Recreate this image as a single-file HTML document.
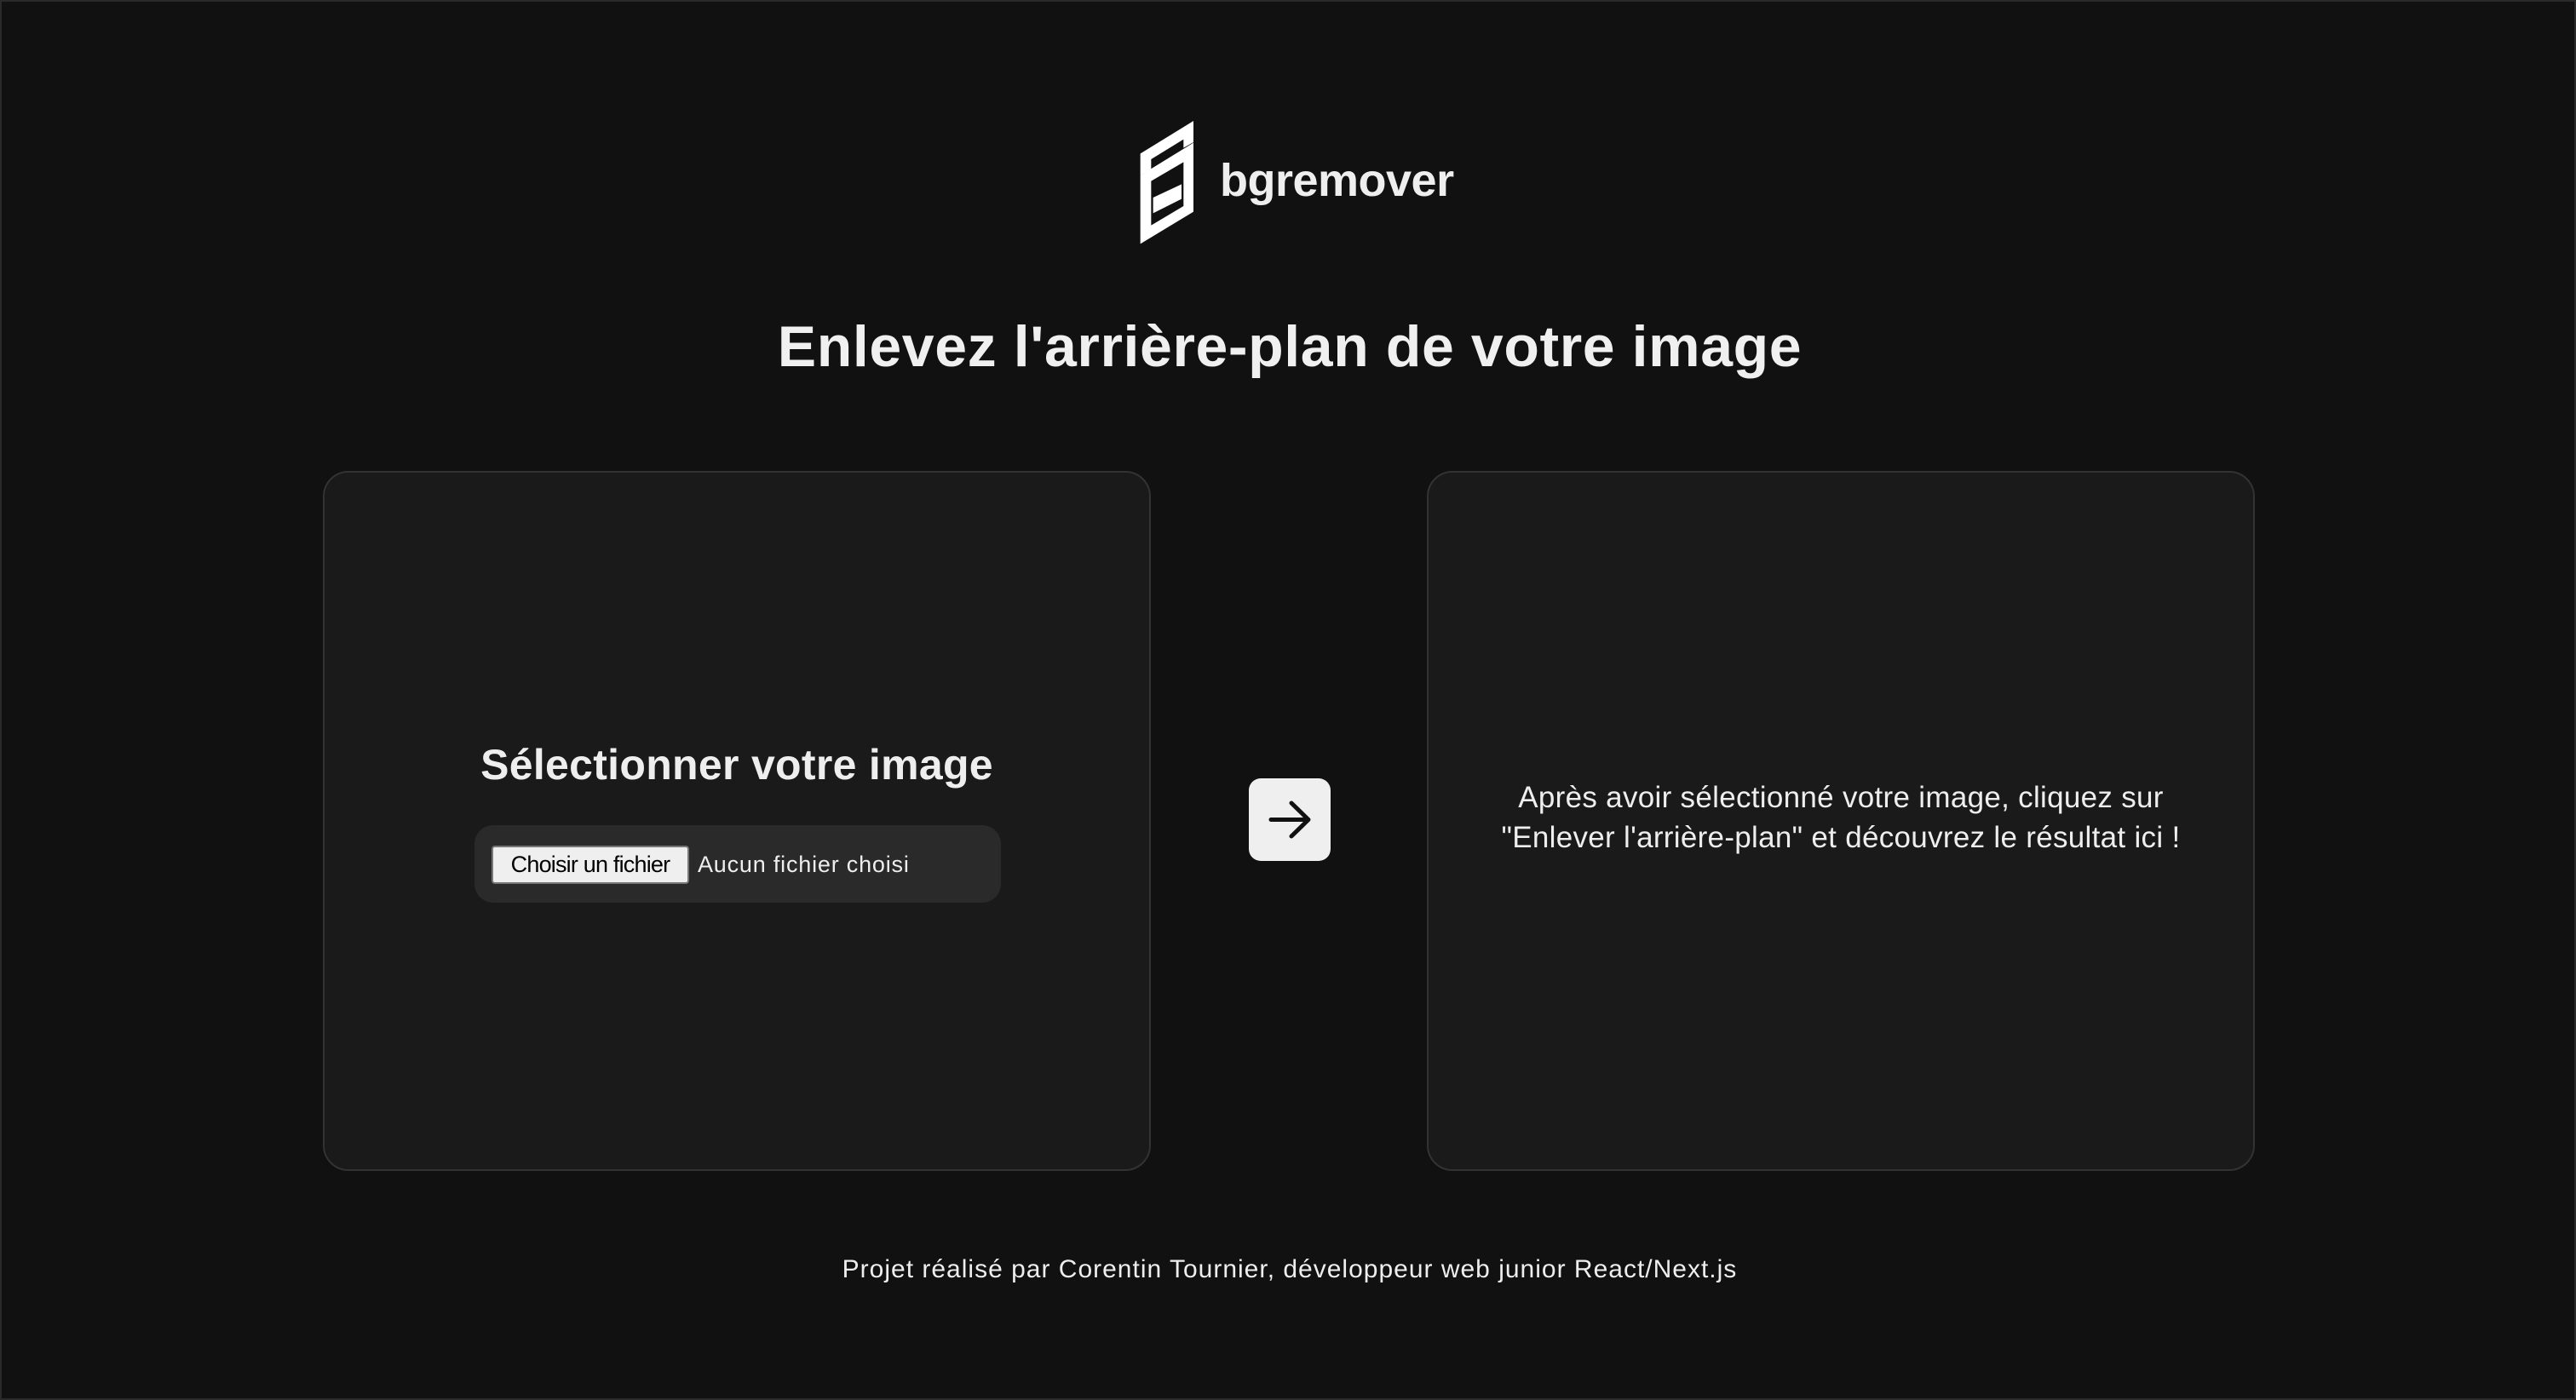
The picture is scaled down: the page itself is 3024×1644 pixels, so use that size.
<!DOCTYPE html>
<html><head><meta charset="utf-8"><style>
html,body{margin:0;padding:0}
body{width:3024px;height:1644px;background:#111;position:relative;overflow:hidden;font-family:"Liberation Sans",sans-serif;color:#eee;box-sizing:border-box;border:2px solid #2a2a2a}
.abs{position:absolute}
.brand{left:1430px;top:179px;font-size:54px;font-weight:bold;letter-spacing:-0.5px;color:#eee}
h1{position:absolute;left:0;width:3024px;top:366px;margin:0;text-align:center;font-size:68px;font-weight:bold;color:#f0f0f0;letter-spacing:0.6px}
.card{position:absolute;top:551px;width:972px;height:822px;background:#1a1a1a;border:2px solid #333;border-radius:30px;box-sizing:border-box}
.sel{position:absolute;left:0;width:100%;top:314px;text-align:center;font-size:50px;font-weight:bold;color:#eee;letter-spacing:0.3px}
.inp{position:absolute;left:176px;top:414px;width:618px;height:91px;background:#2a2a2a;border-radius:22px}
.btn{position:absolute;background:#efefef;border:2px solid #777;border-radius:4px;color:#000;font-size:27px;text-align:center;box-sizing:border-box;white-space:nowrap;letter-spacing:-0.8px}
.nof{position:absolute;font-size:27px;line-height:40px;color:#eee;letter-spacing:0.8px}
.arrow{left:1464px;top:912px;width:96px;height:97px;background:#efefef;border-radius:14px}
.rt{position:absolute;left:0;width:100%;top:358px;text-align:center;font-size:35px;line-height:47px;color:#eee;letter-spacing:0.3px}
.foot{left:0;width:3024px;top:1472px;text-align:center;font-size:30px;color:#eee;letter-spacing:1px}
</style></head><body>
<svg class="abs" style="left:1300px;top:120px" width="450" height="180" viewBox="0 0 1350 540">
<path fill="#fff" d="M110 175 L297 60 L297 135 L262 155 L262 125 L148 195 L148 230 L110 252 Z"/>
<path fill="#fff" fill-rule="evenodd" d="M110 252 L297 137 L297 380 L110 493 Z M148 272 L262 205 L262 360 L148 428 Z"/>
<path fill="#fff" d="M155 330 L255 283 L255 335 L155 385 Z"/>
</svg>
<div class="abs brand">bgremover</div>
<h1>Enlevez l'arrière-plan de votre image</h1>
<div class="card" style="left:377px">
<div class="sel">Sélectionner votre image</div>
<div class="inp"><div class="btn" style="left:20px;top:24px;width:232px;height:45px;line-height:41px">Choisir un fichier</div><div class="nof" style="left:262px;top:26px">Aucun fichier choisi</div></div>
</div>
<div class="abs arrow"><svg width="96" height="97" viewBox="0 0 96 97"><path d="M26 48.5 H70 M50 29 L70 48.5 L50 68" fill="none" stroke="#111" stroke-width="5" stroke-linecap="round" stroke-linejoin="round"/></svg></div>
<div class="card" style="left:1673px">
<div class="rt">Après avoir sélectionné votre image, cliquez sur<br>"Enlever l'arrière-plan" et découvrez le résultat ici !</div>
</div>
<div class="abs foot">Projet réalisé par Corentin Tournier, développeur web junior React/Next.js</div>
</body></html>
